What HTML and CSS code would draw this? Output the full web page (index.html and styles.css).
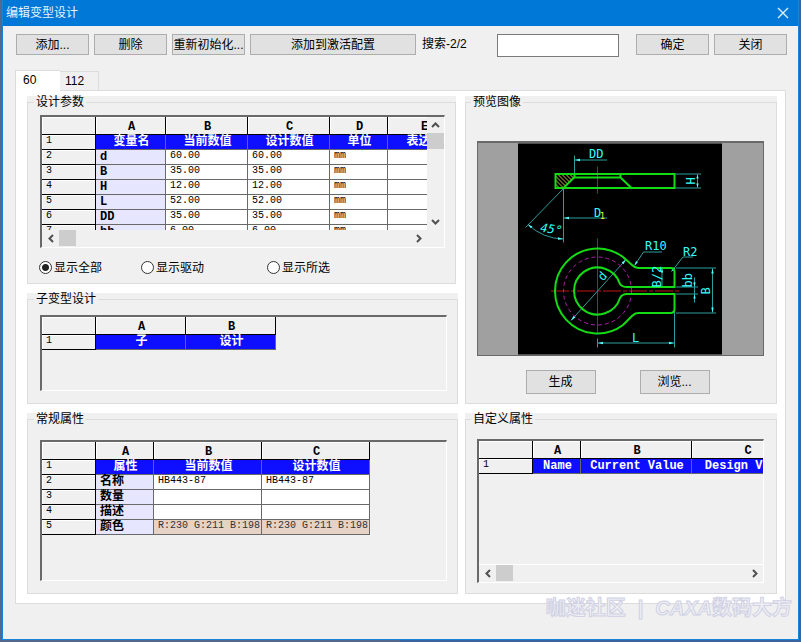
FILE: index.html
```html
<!DOCTYPE html>
<html lang="zh-CN">
<head>
<meta charset="utf-8">
<title>编辑变型设计</title>
<link rel="stylesheet" href="styles.css">
</head>
<body>
<div class="window">
  <header class="titlebar">
    <h1>编辑变型设计</h1>
    <button class="close" type="button" aria-label="关闭窗口"><svg width="12" height="12" viewBox="0 0 12 12"><path d="M1 1L11 11M11 1L1 11"/></svg></button>
  </header>

  <div class="toolbar">
    <button class="btn" type="button">添加...</button>
    <button class="btn" type="button">删除</button>
    <button class="btn" type="button">重新初始化...</button>
    <button class="btn wide" type="button">添加到激活配置</button>
    <label class="search-label" for="search">搜索-2/2</label>
    <input class="search" id="search" type="text">
    <button class="btn" type="button">确定</button>
    <button class="btn" type="button">关闭</button>
  </div>

  <nav class="tabs">
    <button class="tab active" type="button">60</button>
    <button class="tab" type="button">112</button>
  </nav>

  <main class="panel">
    <div class="stack">
      <section class="group narrow">
        <fieldset>
          <legend>设计参数</legend>
          <div class="sheet scroll-both">
            <div class="view view-params">
              <table class="t-params">
                <colgroup><col class="c54"><col class="c70"><col class="c82"><col class="c82"><col class="c58"><col class="c72"></colgroup>
                <thead><tr><th></th><th>A</th><th>B</th><th>C</th><th>D</th><th>E</th></tr></thead>
                <tbody>
                  <tr class="head"><th>1</th><td>变量名</td><td>当前数值</td><td>设计数值</td><td>单位</td><td>表达式</td></tr>
                  <tr><th>2</th><td class="name">d</td><td>60.00</td><td>60.00</td><td>mm</td><td></td></tr>
                  <tr><th>3</th><td class="name">B</td><td>35.00</td><td>35.00</td><td>mm</td><td></td></tr>
                  <tr><th>4</th><td class="name">H</td><td>12.00</td><td>12.00</td><td>mm</td><td></td></tr>
                  <tr><th>5</th><td class="name">L</td><td>52.00</td><td>52.00</td><td>mm</td><td></td></tr>
                  <tr><th>6</th><td class="name">DD</td><td>35.00</td><td>35.00</td><td>mm</td><td></td></tr>
                  <tr><th>7</th><td class="name">bb</td><td>6.00</td><td>6.00</td><td>mm</td><td></td></tr>
                </tbody>
              </table>
            </div>
            <div class="vbar">
              <button type="button" aria-label="向上"><svg width="9" height="6" viewBox="0 0 9 6"><path d="M1 5L4.500 1.500L8 5"/></svg></button>
              <span class="thumb"></span>
              <button class="end" type="button" aria-label="向下"><svg width="9" height="6" viewBox="0 0 9 6"><path d="M1 1L4.500 4.500L8 1"/></svg></button>
            </div>
            <div class="hbar">
              <button type="button" aria-label="向左"><svg width="6" height="9" viewBox="0 0 6 9"><path d="M5 1L1.500 4.500L5 8"/></svg></button>
              <span class="thumb"></span>
              <button class="end" type="button" aria-label="向右"><svg width="6" height="9" viewBox="0 0 6 9"><path d="M1 1L4.500 4.500L1 8"/></svg></button>
            </div>
          </div>
          <div class="radios">
            <label><input type="radio" name="show" checked>显示全部</label>
            <label><input type="radio" name="show">显示驱动</label>
            <label><input type="radio" name="show">显示所选</label>
          </div>
        </fieldset>
      </section>

      <section class="group sub">
        <fieldset>
          <legend>子变型设计</legend>
          <div class="sheet">
            <div class="view">
              <table class="t-sub">
                <colgroup><col class="c54"><col class="c90"><col class="c90"></colgroup>
                <thead><tr><th></th><th>A</th><th>B</th></tr></thead>
                <tbody><tr class="head"><th>1</th><td>子</td><td>设计</td></tr></tbody>
              </table>
            </div>
          </div>
        </fieldset>
      </section>
    </div>

    <section class="group preview">
      <fieldset>
        <legend>预览图像</legend>
        <div class="canvas">
          <svg class="drawing" viewBox="518 143 204 211" role="img">
            <defs>
              <pattern id="hatch" width="4" height="4" patternUnits="userSpaceOnUse"><path d="M-1 -1L5 5" stroke="#c8b43c" stroke-width="1"/></pattern>
            </defs>
            <rect x="518" y="143" width="204" height="211" fill="#000"/>
            <g class="axis">
              <path d="M597.500 166V193M597.500 238V333"/>
              <path d="M551 290.500H680" stroke-dasharray="18 2 4 2"/>
            </g>
            <path d="M555 173.500H574.500V176.500L563.500 187.500H555Z" fill="url(#hatch)"/>
            <g class="dim">
              <path d="M574.500 155V174M574.500 159.500H607"/>
              <path d="M563.500 188V242M563.500 188L525.500 227M528 224Q543 238 563 238.500M564 217.500H607"/>
              <path d="M675 173.500H701M675 187.500H701M697.500 174V187"/>
              <path d="M571 320L626 259"/>
              <path d="M662 251.500H643.500L634.500 265M693 256.500H683L671.500 271"/>
              <path d="M662 268V286M676 286.500H698M676 293.500H698M694.500 277V302"/>
              <path d="M676 267.500H716M676 312.500H716M712.500 268V312"/>
              <path d="M597.500 338V347M674.500 293V347M598 342.500H674"/>
            </g>
            <g class="arrow">
              <path d="M575 159.500l5-1.200v2.400zM564 217.500l5-1.200v2.400zM598 342.500l5-1.200v2.400zM674 342.500l-5-1.200v2.400zM528 224l4.500 2-1.700 1.700zM563 238.500l-5-1.700v2.400zM697.500 174l-1.200 4h2.400zM697.500 187l-1.200-4h2.400zM712.500 268l-1.200 5h2.400zM712.500 312l-1.200-5h2.400zM662 268l-1.200 4h2.400zM694.500 286l-1.200-4h2.400zM694.500 294l-1.200 4h2.400zM626 259l-4.400 3 1.900 1.700zM571 320l4.400-3-1.900-1.700zM634.500 265l1.500-4.500 1.900 1.300zM671.500 271l1.900-4.200 1.700 1.500z"/>
            </g>
            <circle cx="597.500" cy="290.500" r="34" fill="none" stroke="#b41eb4" stroke-dasharray="4 3"/>
            <g class="part">
              <path d="M555.500 173.500H674.500V187.500H555.500ZM563.500 187.500L574.500 176.500V173.500M574.500 177H620.500M620.500 173.500V177L631.500 187.500"/>
              <path d="M623 256.500L632 264.500Q635 267.500 638 267.500H670.500Q674.500 267.500 674.500 271.500V286.500H627Q622 286.500 620 283.500A23.500 23.500 0 1 0 620 297.500Q622 293.500 627 293.500H674.500V308.500Q674.500 312.500 670.500 312.500H638Q635 312.500 632 315.500L623 324.500A42.500 42.500 0 1 1 623 256.500Z"/>
            </g>
            <g class="mark">
              <text x="589" y="157">DD</text>
              <text x="594" y="216">D</text>
              <text class="index" x="600" y="218">1</text>
              <text transform="translate(539 231) rotate(8) skewX(-12)">45°</text>
              <text transform="translate(695 184) rotate(-90)">H</text>
              <text transform="translate(603 281) rotate(-48)">d</text>
              <text x="645" y="249">R10</text>
              <text x="683" y="255">R2</text>
              <text transform="translate(661 287) rotate(-90)">B/2</text>
              <text transform="translate(692 287) rotate(-90)">bb</text>
              <text transform="translate(710 294) rotate(-90)">B</text>
              <text x="632" y="341">L</text>
            </g>
          </svg>
        </div>
        <div class="actions">
          <button class="btn" type="button">生成</button>
          <button class="btn" type="button">浏览...</button>
        </div>
      </fieldset>
    </section>

    <section class="group attrs">
      <fieldset>
        <legend>常规属性</legend>
        <div class="sheet">
          <div class="view">
            <table class="t-attrs">
              <colgroup><col class="c54"><col class="c58"><col class="c108"><col class="c108"></colgroup>
              <thead><tr><th></th><th>A</th><th>B</th><th>C</th></tr></thead>
              <tbody>
                <tr class="head"><th>1</th><td>属性</td><td>当前数值</td><td>设计数值</td></tr>
                <tr><th>2</th><td class="name">名称</td><td>HB443-87</td><td>HB443-87</td></tr>
                <tr><th>3</th><td class="name">数量</td><td></td><td></td></tr>
                <tr><th>4</th><td class="name">描述</td><td></td><td></td></tr>
                <tr><th>5</th><td class="name">颜色</td><td class="tint">R:230 G:211 B:198</td><td class="tint">R:230 G:211 B:198</td></tr>
              </tbody>
            </table>
          </div>
        </div>
      </fieldset>
    </section>

    <section class="group attrs custom">
      <fieldset>
        <legend>自定义属性</legend>
        <div class="sheet">
          <div class="view">
            <table class="t-custom">
              <colgroup><col class="c54"><col class="c48"><col class="c111"><col class="c111"></colgroup>
              <thead><tr><th></th><th>A</th><th>B</th><th>C</th></tr></thead>
              <tbody><tr class="head"><th>1</th><td>Name</td><td>Current Value</td><td>Design Value</td></tr></tbody>
            </table>
          </div>
          <div class="hbar">
            <button type="button" aria-label="向左"><svg width="6" height="9" viewBox="0 0 6 9"><path d="M5 1L1.500 4.500L5 8"/></svg></button>
            <span class="thumb"></span>
            <button class="end" type="button" aria-label="向右"><svg width="6" height="9" viewBox="0 0 6 9"><path d="M1 1L4.500 4.500L1 8"/></svg></button>
          </div>
        </div>
      </fieldset>
    </section>
  </main>
  <p class="watermark"><span>咖迷社区</span><span>|</span><span><i>CAXA</i>数码大方</span></p>
</div>
</body>
</html>
```
FILE: styles.css
```css
* { box-sizing: border-box; }

body {
  margin: 0;
  padding: 0 2px 2px;
  min-height: 100vh;
  display: flex;
  background: linear-gradient(90deg, #53688c 50%, #3a64a0 50%);
  font: 12px/14px "Liberation Sans", "Noto Sans CJK SC", sans-serif;
  color: #000;
}

button, input { font: inherit; color: inherit; margin: 0; }

.window {
  position: relative;
  flex: 1;
  min-width: 0;
  display: flex;
  flex-direction: column;
  background: #f0f0f0;
  border: 1px solid #1883d7;
  border-top: 0;
}

.titlebar {
  height: 26px;
  display: flex;
  align-items: center;
  justify-content: space-between;
  padding: 0 9px 0 3px;
  background: #0078d7;
  color: #e4f4ff;
}
.titlebar h1 { margin: 0; font-size: 12px; font-weight: 400; }
.close { display: flex; padding: 0; border: 0; background: none; }
.close path { stroke: #d8f2ff; stroke-width: 1.4; fill: none; }

.toolbar {
  display: flex;
  align-items: flex-start;
  gap: 5px;
  padding: 8px 11px 0 13px;
  height: 44px;
}
.btn {
  width: 73px;
  height: 21px;
  padding: 0;
  border: 1px solid #adadad;
  border-radius: 0;
  background: #e1e1e1;
  white-space: nowrap;
  line-height: 14px;
}
.btn.wide { width: 166px; }
.search-label { padding: 3px 0 0 1px; }
.search {
  width: 122px;
  height: 23px;
  margin: 0 12px 0 auto;
  border: 1px solid #7a7a7a;
  background: #fff;
}

.tabs {
  display: flex;
  align-items: flex-end;
  padding-left: 12px;
}
.tab {
  width: 39px;
  height: 19px;
  padding: 0 0 0 5px;
  border: 1px solid #dcdcdc;
  border-width: 1px 1px 0 0;
  background: #f0f0f0;
  text-align: left;
}
.tab.active {
  width: 45px;
  height: 21px;
  padding: 0 0 3px 7px;
  border-left-width: 1px;
  border-right-width: 0;
  margin-bottom: -1px;
  z-index: 1;
  background: #fff;
}

.panel {
  display: grid;
  grid-template-columns: 431fr 312fr;
  gap: 9px 7px;
  margin: 0 12px;
  padding: 5px 8px 9px 11px;
  border: 1px solid #dcdcdc;
  background: #fff;
}
.stack { display: flex; flex-direction: column; gap: 9px; min-width: 0; }

.group { background: #f0f0f0; display: flex; min-width: 0; }
.narrow { margin-right: 2px; }
fieldset {
  flex: 1;
  min-width: 0;
  margin: 0;
  padding: 6px 10px 9px 12px;
  border: 1px solid #dcdcdc;
}
legend { padding: 0 2px; margin-left: -6px; line-height: 13px; }
.sub fieldset { padding-top: 9px; padding-bottom: 12px; }
.attrs fieldset { padding-top: 14px; padding-bottom: 12px; }
.custom fieldset { padding-top: 13px; padding-bottom: 10px; padding-left: 11px; padding-right: 12px; }

.sheet {
  border: 2px solid #696969;
  border-right: 1px solid #fff;
  border-bottom: 1px solid #fff;
}
.scroll-both {
  display: grid;
  grid-template-columns: minmax(0, 1fr) 17px;
}
.view { overflow: hidden; }
.view-params { height: 113px; }
.sub .view { height: 73px; }
.attrs .view { height: 138px; }
.custom .view { height: 124px; border-bottom: 1px solid #fff; }

table { table-layout: fixed; border-collapse: separate; border-spacing: 0; }
.t-params { width: 418px; }
.t-sub { width: 234px; }
.t-attrs { width: 328px; }
.t-custom { width: 324px; }
.c48 { width: 48px; }
.c54 { width: 54px; }
.c58 { width: 58px; }
.c70 { width: 70px; }
.c72 { width: 72px; }
.c82 { width: 82px; }
.c90 { width: 90px; }
.c108 { width: 108px; }
.c111 { width: 111px; }

th, td {
  height: 15px;
  padding: 0 0 2px 4px;
  border: solid #696969;
  border-width: 0 1px 1px 0;
  background: #fff;
  font: 10px/12px "Liberation Mono", "Noto Sans CJK SC", monospace;
  text-align: left;
  white-space: nowrap;
}
th {
  border-color: #000;
  background: #f0f0f0;
  box-shadow: inset 1px 1px #fff;
}
thead th {
  height: 18px;
  padding: 2px 0 0 2px;
  font-weight: 700;
  font-size: 12px;
  text-align: center;
}
td.name, .head td { font-weight: 700; font-size: 12px; line-height: 14px; }
td.name { padding-bottom: 0; background: #e6e6ff; }
.head td {
  padding: 0 0 0 2px;
  background: #0f0fff;
  color: #fff;
  text-align: center;
}
td.tint { background: #e6d3c6; color: #333; }

.vbar, .hbar { display: flex; background: #f0f0f0; }
.vbar { flex-direction: column; }
.vbar button, .hbar button {
  width: 17px;
  height: 16px;
  display: flex;
  align-items: center;
  justify-content: center;
  padding: 0;
  border: 0;
  background: none;
}
.hbar { height: 17px; }
.hbar .end { margin-left: auto; }
.vbar .end { margin-top: auto; }
.vbar path, .hbar path { fill: none; stroke: #505050; stroke-width: 2; }
.thumb { width: 17px; height: 16px; background: #cdcdcd; }

.radios {
  display: grid;
  grid-template-columns: 102px 126px auto;
  margin: 13px 0 0 -1px;
}
.radios label { display: flex; align-items: center; gap: 2px; height: 13px; }
.radios input {
  appearance: none;
  width: 13px;
  height: 13px;
  border: 1px solid #333;
  border-radius: 50%;
  background: #fff;
}
.radios input:checked { background: radial-gradient(circle, #222 3px, #fff 4px); }

.preview fieldset { padding: 32px 12px 9px 11px; }
.canvas {
  height: 215px;
  display: flex;
  justify-content: center;
  padding-right: 2px;
  border: 2px solid #696969;
  border-width: 2px 1px 1px;
  background: #a0a0a0;
}
.drawing { display: block; width: 204px; height: 100%; }
.drawing path { fill: none; }
.drawing .axis { stroke: #c01414; }
.drawing .dim { stroke: #2f9c9c; }
.drawing .arrow path { fill: #5ff; }
.drawing .part { stroke: #14dc14; stroke-width: 2; }
.drawing .mark { fill: #3ff; font: 12px "Liberation Sans Narrow", "DejaVu Sans Mono", monospace; }
.drawing .index { fill: #ff3; font-size: 8px; }
.drawing path[fill^="url"] { fill: url(#hatch); }

.actions { display: flex; justify-content: center; gap: 44px; margin: 14px 6px 0 0; }
.actions .btn { width: 70px; height: 24px; }

.watermark {
  position: absolute;
  right: 6px;
  bottom: 18px;
  display: flex;
  gap: 12px;
  margin: 0;
  font: 700 20px/26px "Liberation Sans", "Noto Sans CJK SC", sans-serif;
  white-space: nowrap;
  color: #f0f0f4;
  -webkit-text-stroke: 1px #cfd0e4;
}
```
